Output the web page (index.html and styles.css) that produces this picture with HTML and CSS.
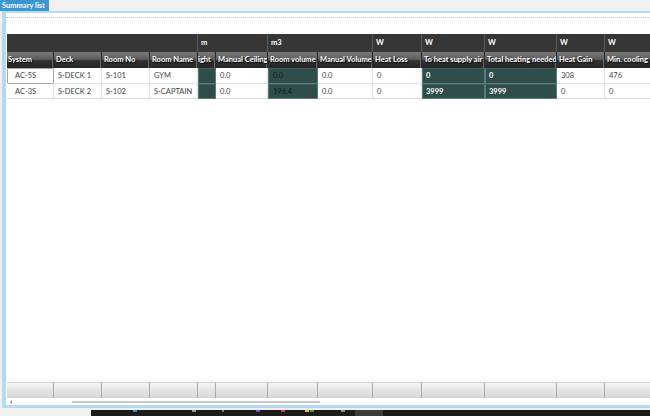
FILE: index.html
```html
<!DOCTYPE html>
<html>
<head>
<meta charset="utf-8">
<link rel="stylesheet" href="styles.css">
</head>
<body>
<div class="screen">
  <div class="tabbar"><div class="tab">Summary list</div></div>
  <div class="panel">
    <div class="inner">
      <div class="frame">
        <div class="grid">
          <div class="row groups">
            <div class="g g-blank"></div>
            <div class="g g-m">m</div>
            <div class="g g-m3">m3</div>
            <div class="g g-w1">W</div>
            <div class="g g-w2">W</div>
            <div class="g g-w3">W</div>
            <div class="g g-w4">W</div>
            <div class="g g-w5">W</div>
          </div>
          <div class="row heads">
            <div class="h c1">System</div>
            <div class="h c2">Deck</div>
            <div class="h c3">Room No</div>
            <div class="h c4">Room Name</div>
            <div class="h c5 clip">ight</div>
            <div class="h c6">Manual Ceiling</div>
            <div class="h c7">Room volume</div>
            <div class="h c8">Manual Volume</div>
            <div class="h c9">Heat Loss</div>
            <div class="h c10">To heat supply air</div>
            <div class="h c11">Total heating needed</div>
            <div class="h c12">Heat Gain</div>
            <div class="h c13">Min. cooling</div>
          </div>
          <div class="row data r1">
            <div class="d c1 sys sel">AC-5S</div>
            <div class="d c2">S-DECK 1</div>
            <div class="d c3">S-101</div>
            <div class="d c4">GYM</div>
            <div class="d c5 teal"></div>
            <div class="d c6">0.0</div>
            <div class="d c7 teal dark">0.0</div>
            <div class="d c8">0.0</div>
            <div class="d c9">0</div>
            <div class="d c10 teal strong">0</div>
            <div class="d c11 teal strong">0</div>
            <div class="d c12">308</div>
            <div class="d c13">476</div>
          </div>
          <div class="row data r2">
            <div class="d c1 sys">AC-3S</div>
            <div class="d c2">S-DECK 2</div>
            <div class="d c3">S-102</div>
            <div class="d c4">S-CAPTAIN</div>
            <div class="d c5 teal"></div>
            <div class="d c6">0.0</div>
            <div class="d c7 teal dark">196.4</div>
            <div class="d c8">0.0</div>
            <div class="d c9">0</div>
            <div class="d c10 teal strong">3999</div>
            <div class="d c11 teal strong">3999</div>
            <div class="d c12">0</div>
            <div class="d c13">0</div>
          </div>
        </div>
        <div class="spacer"></div>
        <div class="row footer">
          <div class="f c1"></div><div class="f c2"></div><div class="f c3"></div><div class="f c4"></div>
          <div class="f c5"></div><div class="f c6"></div><div class="f c7"></div><div class="f c8"></div>
          <div class="f c9"></div><div class="f c10"></div><div class="f c11"></div><div class="f c12"></div>
          <div class="f c13"></div>
        </div>
        <div class="scrollbar">
          <div class="arrow"></div>
          <div class="track"><div class="thumb"></div></div>
        </div>
      </div>
    </div>
  </div>
  <div class="bottom">
    <div class="bottom-left"></div>
    <div class="taskbar">
      <span class="ic ic-blue"></span>
      <span class="ic ic-gray"></span>
      <span class="ic ic-dim"></span>
      <span class="ic ic-purple"></span>
      <span class="ic ic-red"></span>
      <span class="ic ic-yellow"></span>
      <span class="ic ic-green"></span>
      <span class="ic ic-gray2"></span>
      <span class="active"></span>
    </div>
  </div>
</div>
</body>
</html>
```
FILE: styles.css
```css
* { box-sizing: border-box; }
html, body { margin: 0; padding: 0; }
body {
  width: 650px;
  height: 416px;
  overflow: hidden;
  background: #f0f0f0;
  font-family: "Lato", "Liberation Sans", sans-serif;
  font-size: 8px;
  color: #3a3a3a;
}
.screen { width: 650px; height: 416px; display: flex; flex-direction: column; }

.tabbar { height: 11px; display: flex; background: #f0f0f0; }
.tab {
  width: 49px;
  height: 11px;
  background: #3b96d6;
  color: #fff;
  font-weight: bold;
  font-size: 7.5px;
  line-height: 11px;
  padding-left: 2px;
  white-space: nowrap;
  overflow: hidden;
}

.panel {
  height: 397px;
  margin-left: 2px;
  background: #b6d9f2;
  padding: 2px 0 3px 4px;
}
.inner {
  height: 392px;
  background: #fff;
  padding-top: 4px;
  display: flex;
  flex-direction: column;
}
.frame {
  flex: 1;
  border-top: 1px dotted #c4c4c4;
  padding-left: 1px;
  padding-top: 16px;
  display: flex;
  flex-direction: column;
  overflow: hidden;
}

.row { display: flex; white-space: nowrap; }
.c1 { width: 47px; } .c2 { width: 48px; } .c3 { width: 48px; } .c4 { width: 48px; }
.c5 { width: 18px; } .c6 { width: 52px; } .c7 { width: 50px; } .c8 { width: 55px; }
.c9 { width: 49px; } .c10 { width: 63px; } .c11 { width: 72px; } .c12 { width: 48px; }
.c13 { width: 60px; }
.row > div { flex: none; overflow: hidden; }

.groups { height: 18px; background: #363636; }
.g {
  color: #ffffff;
  font-weight: bold;
  font-size: 7.5px;
  line-height: 18px;
  padding-left: 3px;
  border-right: 1px solid #5a5a5a;
}
.g-blank { width: 191px; }
.g-m { width: 70px; }
.g-m3 { width: 105px; }
.g-w1 { width: 49px; }
.g-w2 { width: 63px; }
.g-w3 { width: 72px; }
.g-w4 { width: 48px; }
.g-w5 { width: 60px; border-right: none; }

.heads { height: 16px; background: linear-gradient(#7c7c7c, #5c5c5c 45%, #303030 55%, #262626); }
.h {
  color: #fff;
  font-weight: bold;
  font-size: 7.5px;
  line-height: 16px;
  padding-left: 2px;
  border-right: 1px solid #2a2a2a;
  box-shadow: inset -1px 0 0 #6a6a6a;
  text-shadow: 1px 1px 1px #000;
}
.h.c1 { padding-left: 1px; }
.h.clip { padding-left: 0; }

.data .d {
  height: 100%;
  border-right: 1px solid #e0e0e0;
  border-bottom: 1px solid #e0e0e0;
  padding-left: 4px;
  line-height: 15px;
  font-size: 7.5px;
  color: #444;
}
.r1 { height: 16px; }
.r2 { height: 15px; }
.d.sys { padding-left: 8px; }
.d.sel { border: 1px solid #a8a8a8; border-radius: 1px; line-height: 13px; padding-left: 7px; }
.d.teal {
  background: #2e4d4b;
  border: 1px solid #5c7a78;
  border-top-color: #3d5e5c;
  line-height: 13px;
}
.data .d.teal.dark { color: #0f1a19; }
.data .d.teal.strong { color: #fff; font-weight: bold; padding-left: 3px; }

.spacer { flex: 1; }

.footer { height: 16px; background: linear-gradient(#f6f6f6, #e4e4e4 50%, #d6d6d6); border-top: 1px solid #d0d0d0; }
.f { height: 100%; border-right: 1px solid #a8a8a8; }
.f.c13 { border-right: none; flex: 1; }

.scrollbar { height: 7px; display: flex; align-items: center; background: #fff; }
.arrow {
  width: 0; height: 0;
  margin-left: 3px;
  border-top: 2px solid transparent;
  border-bottom: 2px solid transparent;
  border-right: 2px solid #888;
}
.track { flex: 1; padding-left: 60px; }
.thumb { width: 248px; height: 2px; background: #c8c8c8; }

.bottom { flex: 1; display: flex; padding-top: 2px; }
.bottom-left { width: 91px; }
.taskbar { flex: 1; background: #1c1c1c; position: relative; }
.ic { position: absolute; top: 0; height: 2px; width: 4px; }
.ic-blue { left: 42px; background: #2b8ad9; }
.ic-gray { left: 101px; background: #9a9a9a; }
.ic-dim { left: 131px; background: #7a7a7a; width: 2px; }
.ic-purple { left: 165px; background: #7a4ad0; }
.ic-red { left: 190px; background: #d04040; }
.ic-yellow { left: 214px; background: #e8c040; }
.ic-green { left: 219px; background: #3aa040; }
.ic-gray2 { left: 250px; background: #8a8a8a; }
.active { position: absolute; left: 264px; top: 0; width: 28px; height: 100%; background: #3c3c3c; }
```
